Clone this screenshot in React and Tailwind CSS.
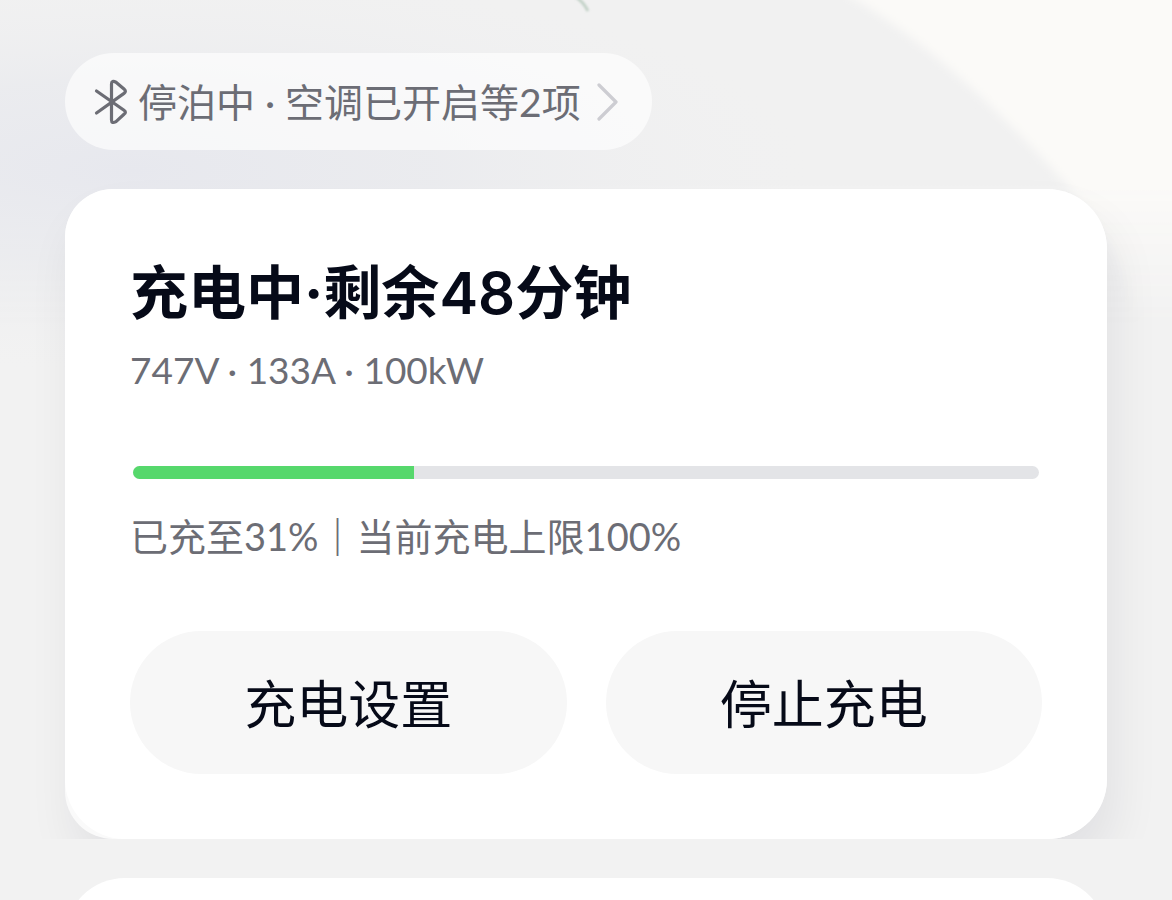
const charge = {
  level: 31,
  limit: 100,
  minutesLeft: 48,
  stats: ["747V", "133A", "100kW"],
};

function BluetoothIcon() {
  return (
    <svg
      viewBox="0 0 34 46"
      className="h-[46px] w-[34px] shrink-0"
      fill="none"
      stroke="currentColor"
      strokeWidth="3.2"
      strokeLinecap="round"
      strokeLinejoin="round"
      aria-hidden="true"
    >
      <path d="M2.5 12 L30 31.2 Q32.8 33.2 30 35.3 L22 42.6 Q17.5 45 17.5 41 L17.5 5 Q17.5 1 22 3.2 L30 10 Q32.8 12.3 30 14.4 L2.5 34" />
    </svg>
  );
}

function ChevronIcon() {
  return (
    <svg
      viewBox="0 0 22 40"
      className="h-10 w-[22px] shrink-0 text-[#cdcdd2]"
      fill="none"
      stroke="currentColor"
      strokeWidth="3.2"
      strokeLinecap="round"
      strokeLinejoin="round"
      aria-hidden="true"
    >
      <path d="M2 3 L19 20 L2 37" />
    </svg>
  );
}

function Backdrop() {
  return (
    <svg
      viewBox="0 0 1172 400"
      preserveAspectRatio="none"
      className="absolute inset-x-0 top-0 h-[400px] w-full"
      aria-hidden="true"
    >
      <defs>
        <radialGradient id="haze" gradientUnits="userSpaceOnUse" cx="0" cy="0" r="1" gradientTransform="translate(130 170) scale(680 200)">
          <stop offset="0" stopColor="#e7e8ee" />
          <stop offset="0.45" stopColor="#e9eaee" stopOpacity="0.75" />
          <stop offset="1" stopColor="#f0f0f1" stopOpacity="0" />
        </radialGradient>
        <linearGradient id="fade" x1="0" y1="0" x2="0" y2="1">
          <stop offset="0" stopColor="#fff" />
          <stop offset="0.45" stopColor="#fff" />
          <stop offset="0.6" stopColor="#999" />
          <stop offset="0.82" stopColor="#000" />
        </linearGradient>
        <mask id="fadeMask">
          <rect width="1172" height="400" fill="url(#fade)" />
        </mask>
        <filter id="soft">
          <feGaussianBlur stdDeviation="5" />
        </filter>
        <filter id="smudge" x="-1" y="-1" width="3" height="3">
          <feGaussianBlur stdDeviation="1" />
        </filter>
      </defs>
      <g mask="url(#fadeMask)">
        <rect width="1172" height="400" fill="#f1f1f1" />
        <path
          d="M820 -20 C920 30 1010 120 1080 200 C1120 250 1150 320 1170 500 L1240 500 L1240 -20 Z"
          fill="#fbfaf8"
          filter="url(#soft)"
        />
      </g>
      <rect width="1172" height="400" fill="url(#haze)" />
      <path d="M574 -4 Q583 1 588 11" fill="none" stroke="#c3d2c8" strokeWidth="3" filter="url(#smudge)" />
    </svg>
  );
}

function StatusPill() {
  return (
    <button
      type="button"
      className="flex h-[97px] items-center self-start rounded-full bg-white/65 px-[29px] text-[39px] whitespace-nowrap text-[#6c6d75]"
    >
      <BluetoothIcon />
      <span className="mr-4 ml-2.5 pt-0.5">停泊中 · 空调已开启等2项</span>
      <span className="pr-1">
        <ChevronIcon />
      </span>
    </button>
  );
}

function ActionButton({ children }) {
  return (
    <button
      type="button"
      className="h-[143px] flex-1 rounded-full bg-[#f7f7f7] pt-0.5 text-[52px] text-[#060a18]"
    >
      {children}
    </button>
  );
}

function ChargingCard() {
  return (
    <div className="mt-[39px] shrink-0 [clip-path:inset(-40px_-80px_0)]">
      <section className="rounded-l-[48px] rounded-r-[60px] bg-[#fafafa] shadow-[8px_28px_48px_rgba(20,20,40,0.07)]">
        <div className="rounded-tl-[48px] rounded-r-[60px] rounded-bl-[60px] bg-white p-[65px]">
          <h1 className="font-['Inter','Noto_Sans_CJK_SC',sans-serif] text-[58px] leading-[78px] font-bold text-[#060a18]">
            充电中·剩余<span className="font-semibold">{charge.minutesLeft}</span>分钟
          </h1>
          <p className="mt-3 text-[37px] leading-[52px] text-[#6c6d75]">
            {charge.stats.join(" · ")}
          </p>

          <div
            role="progressbar"
            aria-label="充电进度"
            aria-valuenow={charge.level}
            className="mx-[3px] mt-[70px] h-[13px] overflow-hidden rounded-full bg-[#e3e4e7]"
          >
            <div className="h-full bg-[#56d86c]" style={{ width: `${charge.level}%` }} />
          </div>
          <p className="mt-[31px] text-[38px] leading-[52px] text-[#6c6d75]">
            已充至{charge.level}%<span className="font-bold">｜</span>当前充电上限{charge.limit}%
          </p>

          <div className="mt-[69px] flex gap-[39px]">
            <ActionButton>充电设置</ActionButton>
            <ActionButton>停止充电</ActionButton>
          </div>
        </div>
      </section>
    </div>
  );
}

function App() {
  return (
    <main
      lang="zh-CN"
      className="relative h-screen overflow-hidden bg-[#f2f2f2] font-['Lato','Noto_Sans_CJK_SC',sans-serif]"
    >
      <Backdrop />
      <div className="relative flex flex-col px-[65px] pt-[53px]">
        <StatusPill />
        <ChargingCard />
        {/* Next card, peeking in from below the fold */}
        <section className="mt-[39px] h-60 shrink-0 rounded-[60px] bg-white" />
      </div>
    </main>
  );
}

export default App;
